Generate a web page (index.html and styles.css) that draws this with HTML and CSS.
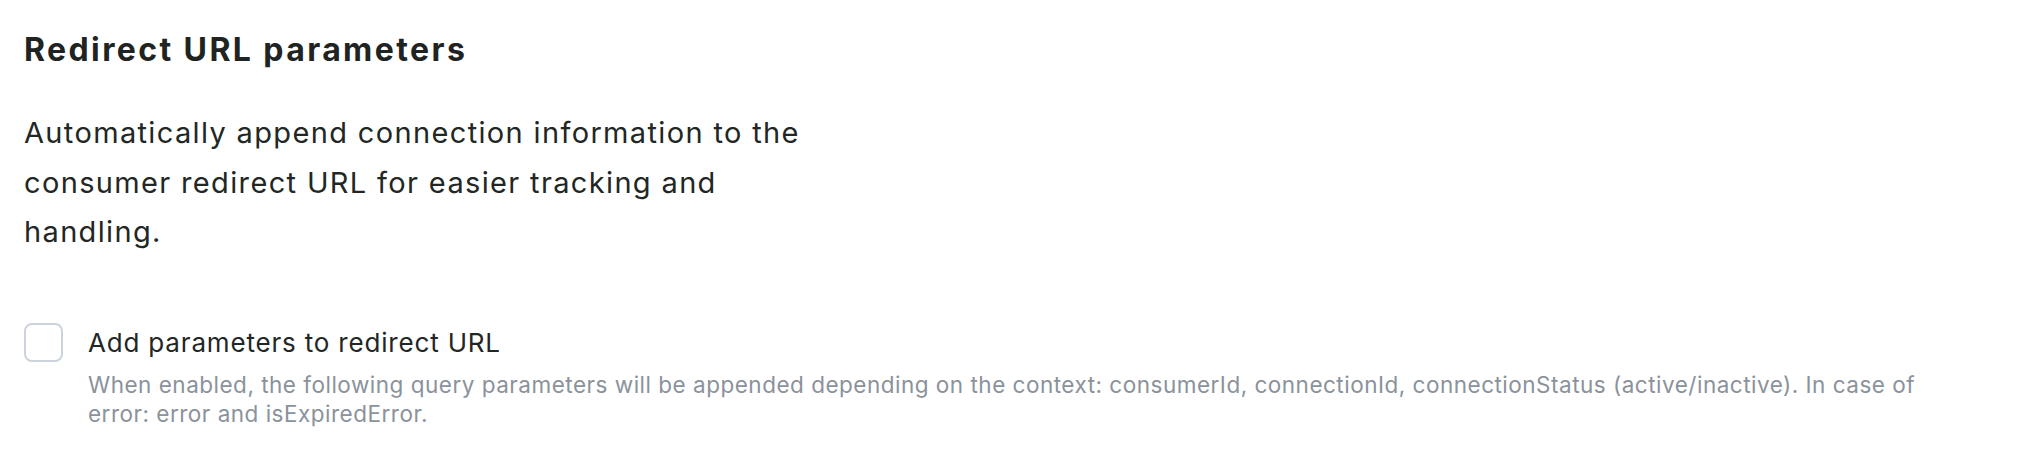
FILE: index.html
```html
<!DOCTYPE html>
<html>
<head>
<meta charset="utf-8">
<link rel="stylesheet" href="styles.css">
</head>
<body>
<section class="settings">
  <h2 class="title">Redirect URL parameters</h2>
  <p class="intro">Automatically append connection information to the consumer redirect URL for easier tracking and handling.</p>
  <div class="option">
    <span class="checkbox"></span>
    <div class="option-text">
      <div class="label">Add parameters to redirect URL</div>
      <div class="hint">When enabled, the following query parameters will be appended depending on the context: consumerId, connectionId, connectionStatus (active/inactive). In case of error: error and isExpiredError.</div>
    </div>
  </div>
</section>
</body>
</html>
```

FILE: styles.css
```css
html, body {
  margin: 0;
  padding: 0;
  background: #ffffff;
}
body {
  font-family: Inter, "Noto Sans", sans-serif;
  color: #1f2422;
}
.settings {
  padding: 30px 24px 0 24px;
}
.title {
  margin: 0;
  font-size: 32px;
  line-height: 40px;
  font-weight: 700;
  letter-spacing: 2.4px;
  color: #1f2422;
}
.intro {
  margin: 38px 0 0 0;
  max-width: 795px;
  font-size: 29px;
  line-height: 49.5px;
  letter-spacing: 1.35px;
  color: #222725;
}
.option {
  display: flex;
  gap: 25px;
  margin-top: 66px;
}
.checkbox {
  flex: none;
  width: 35px;
  height: 35px;
  border: 2px solid #cdd3dc;
  border-radius: 8px;
}
.option-text {
  max-width: 1845px;
}
.label {
  font-size: 26px;
  line-height: 40px;
  letter-spacing: 0.82px;
  color: #222725;
}
.hint {
  margin-top: 7px;
  font-size: 22.5px;
  line-height: 29.5px;
  letter-spacing: 0.5px;
  color: #8a929c;
}
```
